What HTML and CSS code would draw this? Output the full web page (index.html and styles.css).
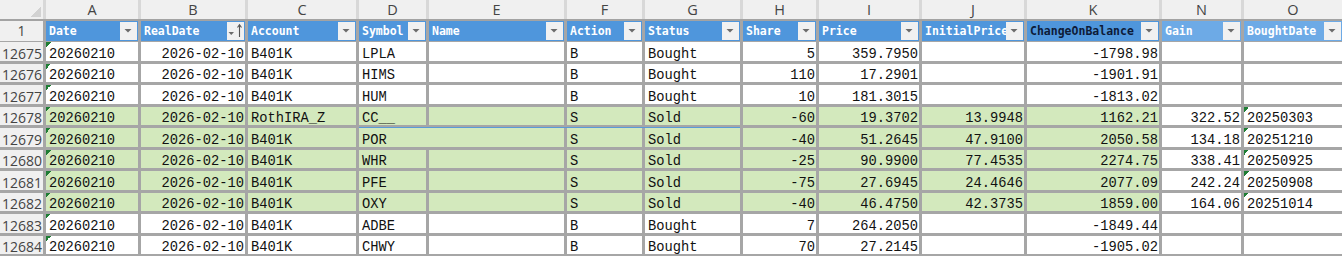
FILE: index.html
```html
<!DOCTYPE html>
<html>
<head>
<meta charset="utf-8">
<title>Sheet</title>
<link rel="stylesheet" href="styles.css">
</head>
<body>
<div class="sheet">
  <div class="row letters">
    <div class="corner"></div>
    <div>A</div><div>B</div><div>C</div><div>D</div><div>E</div><div>F</div><div>G</div><div>H</div><div>I</div><div>J</div><div>K</div><div>N</div><div>O</div>
  </div>

  <div class="row head">
    <div class="rh">1</div>
    <div class="hc"><span>Date</span><i class="dd"><svg width="17" height="18" viewBox="0 0 17 18"><path d="M4.5 7H11.5L8 10.5Z" fill="#6b6b6b"/></svg></i></div>
    <div class="hc"><span>RealDate</span><i class="dd"><svg width="17" height="18" viewBox="0 0 17 18"><path d="M1.5 10H7L4.25 13Z" fill="#6b6b6b"/><path d="M12.5 3V15M10.5 5.5L12.5 2.7L14.5 5.5" fill="none" stroke="#555" stroke-width="1.1"/></svg></i></div>
    <div class="hc"><span>Account</span><i class="dd"><svg width="17" height="18" viewBox="0 0 17 18"><path d="M4.5 7H11.5L8 10.5Z" fill="#6b6b6b"/></svg></i></div>
    <div class="hc"><span>Symbol</span><i class="dd"><svg width="17" height="18" viewBox="0 0 17 18"><path d="M4.5 7H11.5L8 10.5Z" fill="#6b6b6b"/></svg></i></div>
    <div class="hc"><span>Name</span><i class="dd"><svg width="17" height="18" viewBox="0 0 17 18"><path d="M4.5 7H11.5L8 10.5Z" fill="#6b6b6b"/></svg></i></div>
    <div class="hc"><span>Action</span><i class="dd"><svg width="17" height="18" viewBox="0 0 17 18"><path d="M4.5 7H11.5L8 10.5Z" fill="#6b6b6b"/></svg></i></div>
    <div class="hc"><span>Status</span><i class="dd"><svg width="17" height="18" viewBox="0 0 17 18"><path d="M4.5 7H11.5L8 10.5Z" fill="#6b6b6b"/></svg></i></div>
    <div class="hc"><span>Share</span><i class="dd"><svg width="17" height="18" viewBox="0 0 17 18"><path d="M4.5 7H11.5L8 10.5Z" fill="#6b6b6b"/></svg></i></div>
    <div class="hc"><span>Price</span><i class="dd"><svg width="17" height="18" viewBox="0 0 17 18"><path d="M4.5 7H11.5L8 10.5Z" fill="#6b6b6b"/></svg></i></div>
    <div class="hc"><span>InitialPrice</span><i class="dd"><svg width="17" height="18" viewBox="0 0 17 18"><path d="M4.5 7H11.5L8 10.5Z" fill="#6b6b6b"/></svg></i></div>
    <div class="hc active"><span>ChangeOnBalance</span><i class="dd"><svg width="17" height="18" viewBox="0 0 17 18"><path d="M4.5 7H11.5L8 10.5Z" fill="#6b6b6b"/></svg></i></div>
    <div class="hc light"><span>Gain</span><i class="dd"><svg width="17" height="18" viewBox="0 0 17 18"><path d="M4.5 7H11.5L8 10.5Z" fill="#6b6b6b"/></svg></i></div>
    <div class="hc light"><span>BoughtDate</span><i class="dd"><svg width="17" height="18" viewBox="0 0 17 18"><path d="M4.5 7H11.5L8 10.5Z" fill="#6b6b6b"/></svg></i></div>
  </div>

  <div class="row d t">
    <div class="rh">12675</div>
    <div class="tri">20260210</div><div class="r">2026-02-10</div><div>B401K</div><div>LPLA</div><div></div><div>B</div><div>Bought</div><div class="r">5</div><div class="r">359.7950</div><div></div><div class="r">-1798.98</div><div></div><div></div>
  </div>
  <div class="row d">
    <div class="rh">12676</div>
    <div class="tri">20260210</div><div class="r">2026-02-10</div><div>B401K</div><div>HIMS</div><div></div><div>B</div><div>Bought</div><div class="r">110</div><div class="r">17.2901</div><div></div><div class="r">-1901.91</div><div></div><div></div>
  </div>
  <div class="row d t">
    <div class="rh">12677</div>
    <div class="tri">20260210</div><div class="r">2026-02-10</div><div>B401K</div><div>HUM</div><div></div><div>B</div><div>Bought</div><div class="r">10</div><div class="r">181.3015</div><div></div><div class="r">-1813.02</div><div></div><div></div>
  </div>
  <div class="row d sold">
    <div class="rh">12678</div>
    <div class="tri">20260210</div><div class="r">2026-02-10</div><div>RothIRA_Z</div><div class="selstart">CC__</div><div></div><div>S</div><div>Sold</div><div class="r">-60</div><div class="r">19.3702</div><div class="r">13.9948</div><div class="r">1162.21</div><div class="r w">322.52</div><div class="w tri">20250303</div>
  </div>
  <div class="row d t sold">
    <div class="rh">12679</div>
    <div class="tri">20260210</div><div class="r">2026-02-10</div><div>B401K</div><div class="span2">POR</div><div>S</div><div>Sold</div><div class="r">-40</div><div class="r">51.2645</div><div class="r">47.9100</div><div class="r">2050.58</div><div class="r w">134.18</div><div class="w tri">20251210</div>
  </div>
  <div class="row d sold">
    <div class="rh">12680</div>
    <div class="tri">20260210</div><div class="r">2026-02-10</div><div>B401K</div><div>WHR</div><div></div><div>S</div><div>Sold</div><div class="r">-25</div><div class="r">90.9900</div><div class="r">77.4535</div><div class="r">2274.75</div><div class="r w">338.41</div><div class="w tri">20250925</div>
  </div>
  <div class="row d t sold">
    <div class="rh">12681</div>
    <div class="tri">20260210</div><div class="r">2026-02-10</div><div>B401K</div><div>PFE</div><div></div><div>S</div><div>Sold</div><div class="r">-75</div><div class="r">27.6945</div><div class="r">24.4646</div><div class="r">2077.09</div><div class="r w">242.24</div><div class="w tri">20250908</div>
  </div>
  <div class="row d sold">
    <div class="rh">12682</div>
    <div class="tri">20260210</div><div class="r">2026-02-10</div><div>B401K</div><div>OXY</div><div></div><div>S</div><div>Sold</div><div class="r">-40</div><div class="r">46.4750</div><div class="r">42.3735</div><div class="r">1859.00</div><div class="r w">164.06</div><div class="w tri">20251014</div>
  </div>
  <div class="row d t">
    <div class="rh">12683</div>
    <div class="tri">20260210</div><div class="r">2026-02-10</div><div>B401K</div><div>ADBE</div><div></div><div>B</div><div>Bought</div><div class="r">7</div><div class="r">264.2050</div><div></div><div class="r">-1849.44</div><div></div><div></div>
  </div>
  <div class="row d">
    <div class="rh">12684</div>
    <div class="tri">20260210</div><div class="r">2026-02-10</div><div>B401K</div><div>CHWY</div><div></div><div>B</div><div>Bought</div><div class="r">70</div><div class="r">27.2145</div><div></div><div class="r">-1905.02</div><div></div><div></div>
  </div>
</div>
</body>
</html>
```

FILE: styles.css
```css
* { box-sizing: border-box; }

html, body {
  margin: 0;
  padding: 0;
  background: #a6a6a6;
}

.sheet {
  width: 1342px;
  height: 256px;
  overflow: hidden;
  background: #a6a6a6;
  display: flex;
  flex-direction: column;
}

.row {
  display: grid;
  grid-template-columns: 43px 92px 104px 108px 67px 135px 75px 95px 73px 100px 102px 132px 79px 98px;
  column-gap: 3px;
  flex: none;
}

/* column letters */
.letters {
  height: 21px;
  background: #d8d8d8;
  border-bottom: 2px solid #a3a3a3;
}
.letters > div {
  background: #f0f0f0;
  color: #444444;
  font: 14.5px/19px "Open Sans", "Liberation Sans", sans-serif;
  text-align: center;
}
.letters > .corner {
  background: #f0f0f0 linear-gradient(135deg, transparent 50%, #d2d2d2 50%) no-repeat;
  background-size: 10px 11px;
  background-position: right 2px bottom 2px;
}

/* table header row */
.head {
  height: 20px;
  margin-bottom: 1px;
}
.head > .rh {
  background: #f0f0f0;
  color: #444444;
  font: 14px/20px "Open Sans", "Liberation Sans", sans-serif;
  text-align: center;
}
.hc {
  background: #4f96dc;
  display: flex;
  align-items: center;
  min-width: 0;
  padding-left: 3px;
}
.hc span {
  flex: 1;
  min-width: 0;
  overflow: hidden;
  white-space: nowrap;
  color: #ffffff;
  font: bold 11.5px/18px "DejaVu Sans Mono", "Liberation Mono", monospace;
}
.hc.active span { color: #0d1b38; }
.hc.light { background: #6daae6; }
.dd {
  flex: none;
  width: 17px;
  height: 18px;
  margin: 1px 1px 1px 0;
  background: #f1f1f1;
  display: block;
}
.dd svg { display: block; }

/* data rows */
.d {
  height: 18px;
  margin-bottom: 3px;
}
.d.t { height: 19px; }

.d > div {
  background-color: #ffffff;
  display: flex;
  align-items: flex-end;
  padding: 0 1px 0 3px;
  white-space: nowrap;
  color: #111111;
  font: 13.75px/13px "Liberation Mono", "DejaVu Sans Mono", monospace;
  position: relative;
}
.d > .r { justify-content: flex-end; }

.d > .rh {
  background-color: #f0f0f0;
  color: #444444;
  justify-content: flex-end;
  padding: 0 1px 0 0;
  font: 14px/14px "Open Sans", "Liberation Sans", sans-serif;
}

.sold > div { background-color: #d3e9bd; }
.sold > .w { background-color: #ffffff; }

.d > .tri {
  background-image: linear-gradient(135deg, #1e7d34 50%, transparent 50%);
  background-size: 5px 5px;
  background-repeat: no-repeat;
  background-position: 0 0;
}

.d > .span2 { grid-column: span 2; }

/* selection edge drawn over the gridline */
.selstart::after {
  content: "";
  position: absolute;
  left: 0;
  bottom: -3px;
  width: 381px;
  height: 1px;
  background: #5a9bd8;
}
```
